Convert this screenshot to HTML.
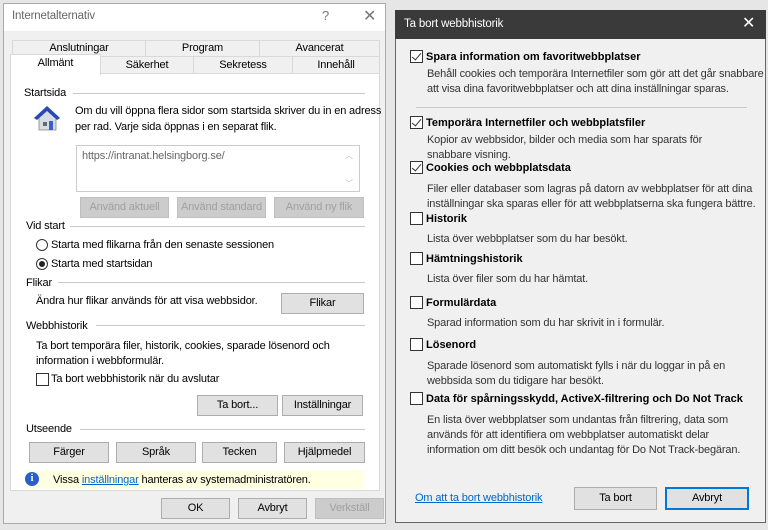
<!DOCTYPE html>
<html><head><meta charset="utf-8"><style>
*{margin:0;padding:0;box-sizing:border-box}
body{width:768px;height:530px;background:#e6e6e6;font-family:"Liberation Sans",sans-serif;font-size:11px;letter-spacing:-0.15px;color:#000;position:relative;overflow:hidden}
.a{position:absolute;white-space:nowrap}
.btn{position:absolute;background:#e1e1e1;border:1px solid #adadad;text-align:center;font-size:11px}
.dis{color:#a0a0a0;background:#cccccc;border-color:#bfbfbf}
.line{position:absolute;height:1px;background:#c8c8c8}
.tab{position:absolute;background:#f0f0f0;border:1px solid #d9d9d9;text-align:center;font-size:11px}
.cb{position:absolute;width:13px;height:13px;border:1px solid #333;background:#fff}
.ck::after{content:"";position:absolute;left:3px;top:0px;width:4px;height:8px;border:solid #333;border-width:0 1.5px 1.5px 0;transform:rotate(40deg)}
.b{font-weight:bold;letter-spacing:0}
.g{color:#333}
</style></head><body>
<div class="a" style="left:3px;top:3px;width:383px;height:521px;background:#f0f0f0;border:1px solid #aaa"></div>
<div class="a" style="left:4px;top:4px;width:381px;height:27px;background:#fff"></div>
<div class="a" style="left:12px;top:10px;color:#666;font-size:11.5px">Internetalternativ</div>
<div class="a" style="left:322px;top:8px;color:#777;font-size:13px">?</div>
<div class="a" style="left:363px;top:6px;color:#777;font-size:16px">✕</div>
<div class="tab" style="left:12px;top:40px;width:134px;height:17px;line-height:15px">Anslutningar</div>
<div class="tab" style="left:145px;top:40px;width:115px;height:17px;line-height:15px">Program</div>
<div class="tab" style="left:259px;top:40px;width:121px;height:17px;line-height:15px">Avancerat</div>
<div class="tab" style="left:100px;top:56px;width:94px;height:18px;line-height:16px">Säkerhet</div>
<div class="tab" style="left:193px;top:56px;width:100px;height:18px;line-height:16px">Sekretess</div>
<div class="tab" style="left:292px;top:56px;width:88px;height:18px;line-height:16px">Innehåll</div>
<div class="a" style="left:10px;top:73px;width:370px;height:418px;background:#fff;border:1px solid #d9d9d9"></div>
<div class="a" style="left:10px;top:54px;width:91px;height:21px;background:#fff;border:1px solid #d9d9d9;border-bottom:none;text-align:center;line-height:17px">Allmänt</div>
<div class="a" style="left:24px;top:87px">Startsida</div><div class="line" style="left:73px;top:93px;width:292px"></div>
<svg class="a" style="left:32px;top:103px" width="30" height="30" viewBox="0 0 30 30"><path d="M4 15 L15 4 L27 15 L24 15 L24 27 L7 27 L7 15Z" fill="#d8dde2" stroke="#888" stroke-width=".8"/><path d="M2 15 L15 3 L28 15 L25 17 L15 8 L5 17Z" fill="#2848b8"/><rect x="11" y="19" width="4" height="4" fill="#667"/><rect x="17" y="18" width="4" height="9" fill="#3a5fcf"/></svg>
<div class="a" style="left:75px;top:103px;line-height:16px">Om du vill öppna flera sidor som startsida skriver du in en adress<br>per rad. Varje sida öppnas i en separat flik.</div>
<div class="a" style="left:76px;top:145px;width:284px;height:47px;border:1px solid #ccc;background:#fff"></div>
<div class="a" style="left:82px;top:150px;color:#666">https://intranat.helsingborg.se/</div>
<div class="a" style="left:345px;top:150px;color:#bbb;font-size:8px">︿</div><div class="a" style="left:345px;top:178px;color:#bbb;font-size:8px">﹀</div>
<div class="btn dis" style="left:80px;top:197px;width:89px;height:21px;line-height:19px">Använd aktuell</div>
<div class="btn dis" style="left:177px;top:197px;width:89px;height:21px;line-height:19px">Använd standard</div>
<div class="btn dis" style="left:274px;top:197px;width:90px;height:21px;line-height:19px">Använd ny flik</div>
<div class="a" style="left:26px;top:220px">Vid start</div><div class="line" style="left:70px;top:226px;width:295px"></div>
<div class="a" style="left:36px;top:239px;width:12px;height:12px;border:1px solid #333;border-radius:50%;background:#fff"></div>
<div class="a" style="left:51px;top:239px">Starta med flikarna från den senaste sessionen</div>
<div class="a" style="left:36px;top:258px;width:12px;height:12px;border:1px solid #333;border-radius:50%;background:#fff"></div>
<div class="a" style="left:39px;top:261px;width:6px;height:6px;border-radius:50%;background:#222"></div>
<div class="a" style="left:51px;top:258px">Starta med startsidan</div>
<div class="a" style="left:26px;top:277px">Flikar</div><div class="line" style="left:58px;top:282px;width:307px"></div>
<div class="a" style="left:36px;top:295px">Ändra hur flikar används för att visa webbsidor.</div>
<div class="btn" style="left:281px;top:293px;width:83px;height:21px;line-height:19px">Flikar</div>
<div class="a" style="left:26px;top:320px">Webbhistorik</div><div class="line" style="left:96px;top:325px;width:269px"></div>
<div class="a" style="left:36px;top:339px;line-height:15px">Ta bort temporära filer, historik, cookies, sparade lösenord och<br>information i webbformulär.</div>
<div class="cb" style="left:36px;top:373px"></div>
<div class="a" style="left:51px;top:373px">Ta bort webbhistorik när du avslutar</div>
<div class="btn" style="left:197px;top:395px;width:81px;height:21px;line-height:19px">Ta bort...</div>
<div class="btn" style="left:282px;top:395px;width:81px;height:21px;line-height:19px">Inställningar</div>
<div class="a" style="left:26px;top:423px">Utseende</div><div class="line" style="left:80px;top:429px;width:285px"></div>
<div class="btn" style="left:29px;top:442px;width:80px;height:21px;line-height:19px">Färger</div>
<div class="btn" style="left:116px;top:442px;width:80px;height:21px;line-height:19px">Språk</div>
<div class="btn" style="left:202px;top:442px;width:75px;height:21px;line-height:19px">Tecken</div>
<div class="btn" style="left:284px;top:442px;width:81px;height:21px;line-height:19px">Hjälpmedel</div>
<div class="a" style="left:25px;top:470px;width:339px;height:19px;background:#ffffe1"></div>
<div class="a" style="left:25px;top:472px;width:14px;height:14px;border-radius:50%;background:#2a5ec9;color:#fff;font-size:10px;font-weight:bold;text-align:center;line-height:14px;font-family:'Liberation Serif',serif">i</div>
<div class="a" style="left:53px;top:474px">Vissa <span style="color:#0066cc;text-decoration:underline">inställningar</span> hanteras av systemadministratören.</div>
<div class="btn" style="left:161px;top:498px;width:69px;height:21px;line-height:19px">OK</div>
<div class="btn" style="left:238px;top:498px;width:69px;height:21px;line-height:19px">Avbryt</div>
<div class="btn dis" style="left:315px;top:498px;width:69px;height:21px;line-height:19px">Verkställ</div>
<div class="a" style="left:395px;top:10px;width:371px;height:513px;background:#f0f0f0;border:1px solid #666"></div>
<div class="a" style="left:395px;top:10px;width:371px;height:29px;background:#3a3a3a"></div>
<div class="a" style="left:404px;top:18px;color:#fff;font-size:11.5px">Ta bort webbhistorik</div>
<div class="a" style="left:742px;top:13px;color:#fff;font-size:16px">✕</div>
<div class="cb ck" style="left:410px;top:50px"></div><div class="a b" style="left:426px;top:51px">Spara information om favoritwebbplatser</div>
<div class="a g" style="left:427px;top:67px;line-height:15px">Behåll cookies och temporära Internetfiler som gör att det går snabbare<br>att visa dina favoritwebbplatser och att dina inställningar sparas.</div>
<div class="line" style="left:416px;top:107px;width:331px"></div>
<div class="cb ck" style="left:410px;top:116px"></div><div class="a b" style="left:426px;top:117px">Temporära Internetfiler och webbplatsfiler</div>
<div class="a g" style="left:427px;top:133px;line-height:15px">Kopior av webbsidor, bilder och media som har sparats för<br>snabbare visning.</div>
<div class="cb ck" style="left:410px;top:161px"></div><div class="a b" style="left:426px;top:162px">Cookies och webbplatsdata</div>
<div class="a g" style="left:427px;top:182px;line-height:15px">Filer eller databaser som lagras på datorn av webbplatser för att dina<br>inställningar ska sparas eller för att webbplatserna ska fungera bättre.</div>
<div class="cb" style="left:410px;top:212px"></div><div class="a b" style="left:426px;top:213px">Historik</div>
<div class="a g" style="left:427px;top:233px">Lista över webbplatser som du har besökt.</div>
<div class="cb" style="left:410px;top:252px"></div><div class="a b" style="left:426px;top:253px">Hämtningshistorik</div>
<div class="a g" style="left:427px;top:273px">Lista över filer som du har hämtat.</div>
<div class="cb" style="left:410px;top:296px"></div><div class="a b" style="left:426px;top:297px">Formulärdata</div>
<div class="a g" style="left:427px;top:317px">Sparad information som du har skrivit in i formulär.</div>
<div class="cb" style="left:410px;top:338px"></div><div class="a b" style="left:426px;top:339px">Lösenord</div>
<div class="a g" style="left:427px;top:359px;line-height:15px">Sparade lösenord som automatiskt fylls i när du loggar in på en<br>webbsida som du tidigare har besökt.</div>
<div class="cb" style="left:410px;top:392px"></div><div class="a b" style="left:426px;top:393px">Data för spårningsskydd, ActiveX-filtrering och Do Not Track</div>
<div class="a g" style="left:427px;top:413px;line-height:15px">En lista över webbplatser som undantas från filtrering, data som<br>används för att identifiera om webbplatser automatiskt delar<br>information om ditt besök och undantag för Do Not Track-begäran.</div>
<div class="a" style="left:415px;top:492px;color:#0066cc;text-decoration:underline">Om att ta bort webbhistorik</div>
<div class="btn" style="left:574px;top:487px;width:83px;height:23px;line-height:21px">Ta bort</div>
<div class="btn" style="left:665px;top:487px;width:84px;height:23px;line-height:19px;border:2px solid #0078d7">Avbryt</div>
</body></html>
